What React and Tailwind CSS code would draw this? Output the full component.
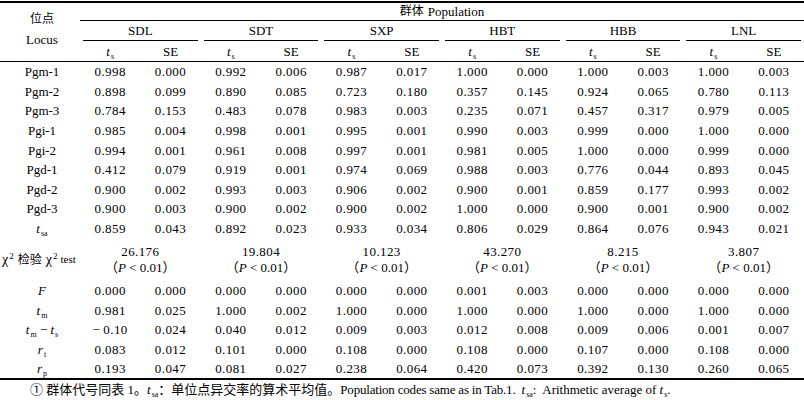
const serif = { fontFamily: '"Liberation Serif", "Noto Sans CJK SC", serif' };
const cjk = { fontFamily: '"Liberation Serif", "Noto Sans CJK SC", serif' };

const groups = ["SDL", "SDT", "SXP", "HBT", "HBB", "LNL"];

const T = ({ sub, v = "t" }) => (
  <span className="whitespace-nowrap">
    <i>{v}</i>
    <span className="relative top-[3px] text-[8px] ml-[1px]">{sub}</span>
  </span>
);

const topRows = [
  ["Pgm-1", "0.998 0.000 0.992 0.006 0.987 0.017 1.000 0.000 1.000 0.003 1.000 0.003"],
  ["Pgm-2", "0.898 0.099 0.890 0.085 0.723 0.180 0.357 0.145 0.924 0.065 0.780 0.113"],
  ["Pgm-3", "0.784 0.153 0.483 0.078 0.983 0.003 0.235 0.071 0.457 0.317 0.979 0.005"],
  ["Pgi-1", "0.985 0.004 0.998 0.001 0.995 0.001 0.990 0.003 0.999 0.000 1.000 0.000"],
  ["Pgi-2", "0.994 0.001 0.961 0.008 0.997 0.001 0.981 0.005 1.000 0.000 0.999 0.000"],
  ["Pgd-1", "0.412 0.079 0.919 0.001 0.974 0.069 0.988 0.003 0.776 0.044 0.893 0.045"],
  ["Pgd-2", "0.900 0.002 0.993 0.003 0.906 0.002 0.900 0.001 0.859 0.177 0.993 0.002"],
  ["Pgd-3", "0.900 0.003 0.900 0.002 0.900 0.002 1.000 0.000 0.900 0.001 0.900 0.002"],
  [<T sub="sa" />, "0.859 0.043 0.892 0.023 0.933 0.034 0.806 0.029 0.864 0.076 0.943 0.021"],
];

const chi = ["26.176", "19.804", "10.123", "43.270", "8.215", "3.807"];

const bottomRows = [
  [<i>F</i>, "0.000 0.000 0.000 0.000 0.000 0.000 0.001 0.003 0.000 0.000 0.000 0.000"],
  [<T sub="m" />, "0.981 0.025 1.000 0.002 1.000 0.000 1.000 0.000 1.000 0.000 1.000 0.000"],
  [
    <span className="whitespace-nowrap">
      <T sub="m" /> − <T sub="s" />
    </span>,
    "−\u20090.10 0.024 0.040 0.012 0.009 0.003 0.012 0.008 0.009 0.006 0.001 0.007",
  ],
  [<T v="r" sub="t" />, "0.083 0.012 0.101 0.000 0.108 0.000 0.108 0.000 0.107 0.000 0.108 0.000"],
  [<T v="r" sub="p" />, "0.193 0.047 0.081 0.027 0.238 0.064 0.420 0.073 0.392 0.130 0.260 0.065"],
];

function DataRow({ label, values, h }) {
  return (
    <div className={`grid grid-cols-[80px_repeat(12,minmax(0,1fr))] items-center text-center ${h}`}>
      <div className="pl-[4px]">{label}</div>
      {values.split(/ (?=[−0-9])/).map((v, i) => (
        <div key={i} className="tracking-[0.4px] whitespace-nowrap">
          {v}
        </div>
      ))}
    </div>
  );
}

export default function App() {
  return (
    <div className="w-[804px] h-[400px] overflow-hidden bg-white text-black text-[13px] leading-none pt-[1px]" style={serif}>
      <div className="border-t-2 border-black">
        {/* header */}
        <div className="flex h-[59px] border-b border-black">
          <div className="w-[80px] flex flex-col items-center justify-center gap-[8px] pb-[6px] pl-[4px]">
            <span style={cjk} className="text-[12px]">位点</span>
            <span>Locus</span>
          </div>
          <div className="flex-1 flex flex-col">
            <div className="h-[18px] flex items-center justify-center border-b border-black pb-[1px]">
              <span style={cjk} className="text-[12px] mr-[4px]">群体</span>
              <span>Population</span>
            </div>
            <div className="h-[20px] grid grid-cols-6">
              {groups.map((g) => (
                <div key={g} className="px-[3px] h-full">
                  <div className="h-full border-b border-black flex items-center justify-center">{g}</div>
                </div>
              ))}
            </div>
            <div className="flex-1 grid grid-cols-12 items-center text-center">
              {groups.map((g) => [
                <div key={g + "t"}>
                  <T sub="s" />
                </div>,
                <div key={g + "se"}>SE</div>,
              ])}
            </div>
          </div>
        </div>

        {/* body */}
        {topRows.map(([l, v], i) => (
          <DataRow key={i} label={l} values={v} h="h-[19.6px]" />
        ))}

        <div className="grid grid-cols-[80px_repeat(6,minmax(0,1fr))] h-[42.8px] items-center text-center">
          <div className="whitespace-nowrap text-left pl-[2px] flex items-center text-[14px]">
            <span>χ<span className="relative top-[-5px] text-[9px] ml-[1px]">2</span></span>
            <span style={cjk} className="text-[12px] mx-[4px]">检验</span>
            <span>χ<span className="relative top-[-5px] text-[9px] ml-[1px]">2</span></span>
            <span className="text-[11px] ml-[3px]">test</span>
          </div>
          {chi.map((c) => (
            <div key={c} className="flex flex-col items-center gap-[3px]">
              <span className="tracking-[0.4px]">{c}</span>
              <span className="whitespace-nowrap">
                <span style={cjk}>（</span>
                <i>P</i> &lt; 0.01
                <span style={cjk}>）</span>
              </span>
            </div>
          ))}
        </div>

        <div className="border-b-2 border-black">
          {bottomRows.map(([l, v], i) => (
            <DataRow key={i} label={l} values={v} h="h-[19.4px]" />
          ))}
        </div>

        <div className="pl-[30px] h-[18px] text-[13px] whitespace-nowrap flex items-center">
          <span style={cjk}>①&nbsp;群体代号同表 1。</span>
          <T sub="sa" />
          <span style={cjk}>：单位点异交率的算术平均值。</span>
          <span className="tracking-[-0.2px]">Population codes same as in Tab.1.&nbsp;&nbsp;</span>
          <T sub="sa" />
          <span>:&nbsp; Arithmetic average of&nbsp;</span>
          <T sub="s" />
          <span>.</span>
        </div>
      </div>
    </div>
  );
}
